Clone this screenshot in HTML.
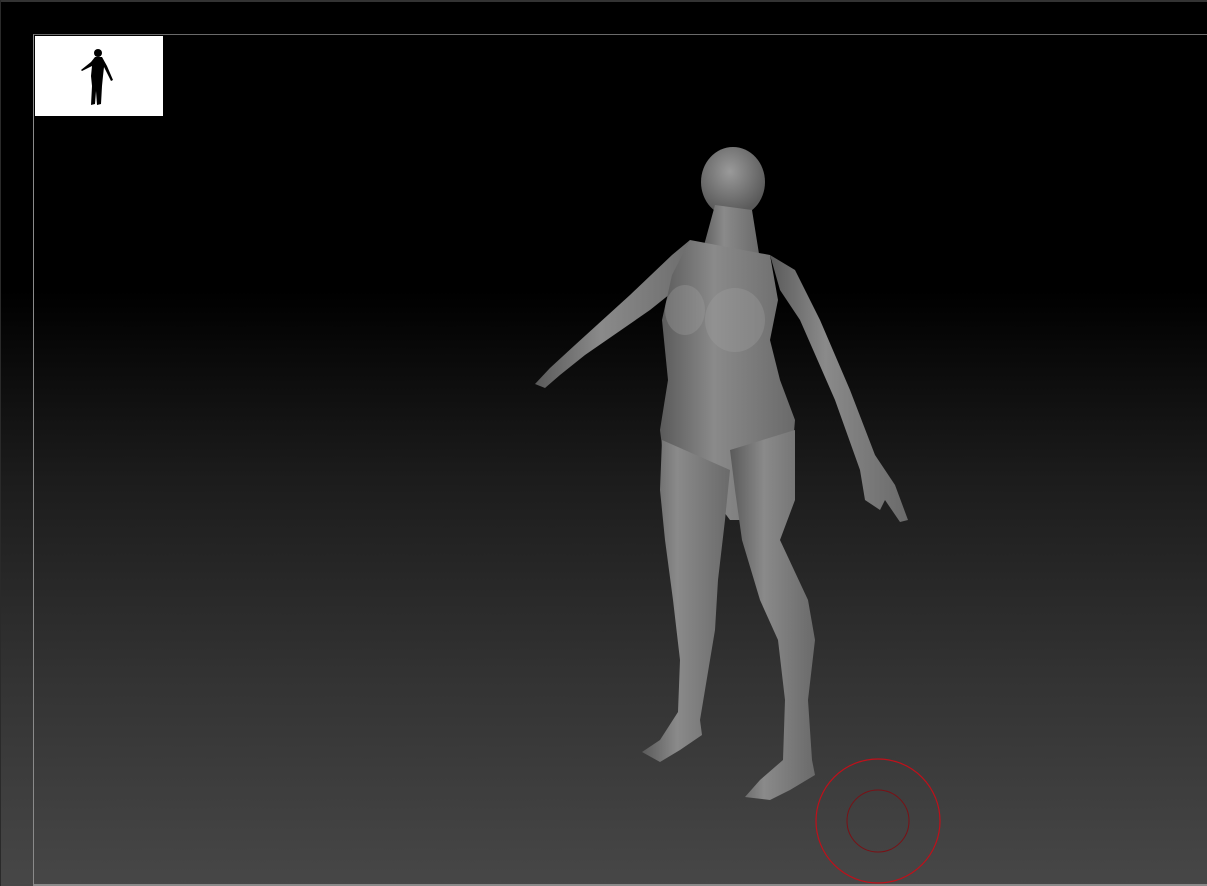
<!DOCTYPE html>
<html><head><style>
html,body{margin:0;padding:0;width:1207px;height:886px;overflow:hidden}
body{position:relative;background:linear-gradient(#000 0px,#000 290px,#1c1c1c 480px,#333 680px,#474747 886px)}
.top{position:absolute;left:0;top:0;width:1207px;height:2px;background:#333}
.lft{position:absolute;left:0;top:0;width:1px;height:886px;background:#2a2a2a}
.frame{position:absolute;left:33px;top:34px;width:1180px;height:849px;border-left:1px solid #8a8a8a;border-top:1px solid #6a6a6a;border-bottom:2px solid #8a8a8a}
.thumb{position:absolute;left:35px;top:36px;width:128px;height:80px;background:#fff}
svg{position:absolute;left:0;top:0}
</style></head><body>
<div class="top"></div><div class="lft"></div>
<div class="frame"></div>
<div class="thumb">
<svg width="128" height="80" viewBox="0 0 128 80">
<g fill="#000">
<circle cx="63" cy="17" r="4"/>
<path d="M60 21 L67 21 L72 30 L78 44 L76 45 L69 31 L68 40 L67 50 L66 68 L62 69 L61 55 L60 68 L56 69 L57 50 L56 40 L57 30 L47 35 L46 34 L56 26 Z"/>
</g></svg></div>
<svg width="1207" height="886" viewBox="0 0 1207 886">
<defs>
<linearGradient id="g" x1="0" y1="0" x2="1" y2="0">
<stop offset="0" stop-color="#5a5a5a"/><stop offset="0.4" stop-color="#8a8a8a"/><stop offset="1" stop-color="#6a6a6a"/>
</linearGradient>
<radialGradient id="h" cx="0.45" cy="0.35" r="0.6"><stop offset="0" stop-color="#9a9a9a"/><stop offset="1" stop-color="#5a5a5a"/></radialGradient>
</defs>
<g fill="url(#g)">
<ellipse cx="733" cy="182" rx="32" ry="35" fill="url(#h)"/>
<path d="M715 205 L752 210 L760 260 L700 260 Z"/>
<!-- left arm -->
<path d="M690 240 L700 270 L650 310 L585 355 L560 375 L545 388 L535 384 L550 368 L575 345 L630 295 L672 255 Z"/>
<!-- right arm -->
<path d="M770 255 L795 270 L820 320 L850 390 L875 455 L895 485 L908 520 L900 522 L885 500 L880 510 L865 500 L860 470 L835 400 L800 320 L780 290 Z"/>
<!-- torso -->
<path d="M690 240 L770 255 L778 300 L770 340 L780 380 L795 420 L790 480 L765 520 L730 520 L700 480 L665 470 L660 430 L668 380 L662 320 L672 275 Z"/>
<!-- left leg -->
<path d="M662 440 L730 470 L725 520 L718 580 L715 630 L705 690 L700 720 L702 735 L680 750 L660 762 L642 752 L660 740 L678 712 L680 660 L673 600 L665 540 L660 490 Z"/>
<!-- right leg -->
<path d="M730 450 L795 430 L795 500 L780 540 L808 600 L815 640 L808 700 L812 760 L815 775 L790 790 L770 800 L745 797 L760 780 L783 760 L785 700 L778 640 L760 600 L742 540 L735 490 Z"/>
</g>
<g fill="#a0a0a0" opacity="0.35">
<ellipse cx="685" cy="310" rx="20" ry="25"/>
<ellipse cx="735" cy="320" rx="30" ry="32"/>
</g>
<circle cx="878" cy="821" r="62" fill="none" stroke="#c0101a" stroke-width="1.2"/>
<circle cx="878" cy="821" r="31" fill="none" stroke="#7a1015" stroke-width="1"/>
</svg>
</body></html>
